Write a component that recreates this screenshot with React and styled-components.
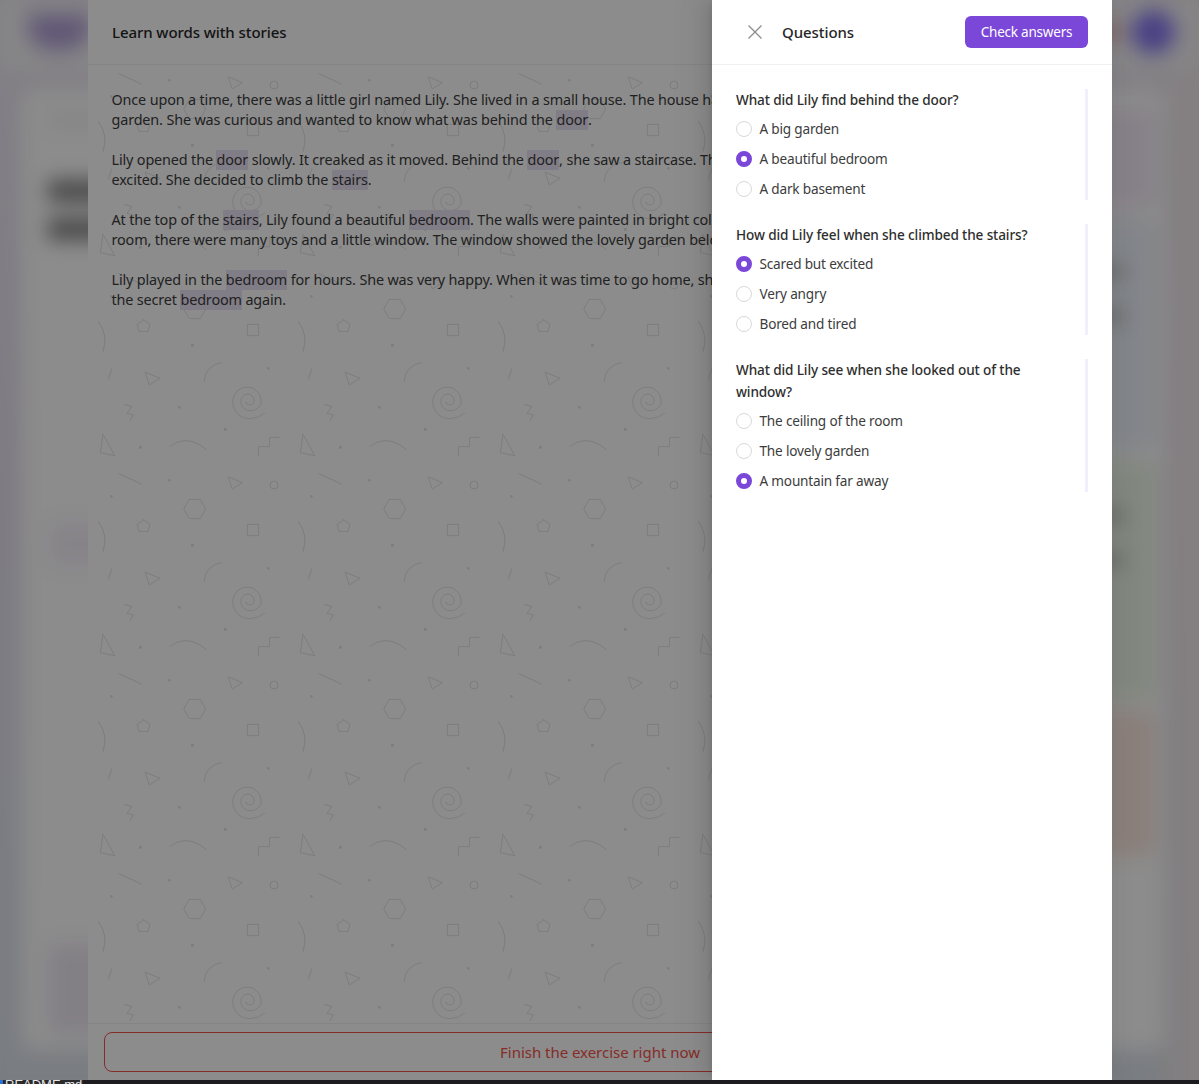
import React from "react";
import styled, { createGlobalStyle } from "styled-components";

const tile = `<svg xmlns='http://www.w3.org/2000/svg' width='200' height='200' viewBox='0 0 600 600'><g fill='none' stroke='#e3e3e3' stroke-width='3'><path d='M30 3Q62 45 45 95M167 0L186 13L180 34L153 34L147 13ZM167 598L186 612L180 634L153 634L147 612ZM478 13H512V47H478ZM72 145L61 178M171 156L216 175L184 195ZM404 127Q352 135 348 185M531 279Q510 296 485 296A51 51 0 0 1 434 245A44 44 0 0 1 478 201A43 44 0 0 1 520 245A33 27 0 0 1 487 272A29 27 0 0 1 458 245A22 23 0 0 1 480 222A18 21 0 0 1 498 243A13 12 0 0 1 485 255A12 10 0 0 1 473 245M109 253L132 260L117 280L137 285L125 302M45 343L80 407L37 398ZM244 380Q300 340 356 390M511 408V380H545V352H574M91 460L162 493M420 470L463 488L433 507ZM287 567L304 538H337L353 567L337 596H304Z'/><circle cx='558' cy='495' r='12'/></g><g fill='#e3e3e3'><rect x='309' y='72' width='8' height='8'/><rect x='408' y='324' width='8' height='8'/><rect x='153' y='378' width='8' height='8'/><circle cx='541' cy='145' r='4'/><circle cx='274' cy='262' r='4'/><circle cx='244' cy='481' r='4'/><circle cx='70' cy='529' r='4'/></g></svg>`;
const tileUrl = `url("data:image/svg+xml,${encodeURIComponent(tile)}")`;

const font = `"Noto Sans", "Open Sans", sans-serif`;

const Global = createGlobalStyle`
  html, body { margin: 0; padding: 0; background: #1c1c1e; }
  body { font-family: ${font}; color: #1f1f1f; overflow: hidden; }
  * { box-sizing: border-box; }
`;

const Screen = styled.div`
  position: relative;
  width: 1199px;
  height: 1084px;
  overflow: hidden;
  background: #1c1c1e;
`;

const Frame = styled.div`
  position: relative;
  width: 1199px;
  height: 1080px;
  overflow: hidden;
  background: #fff;
`;

const BlurredPage = styled.div`
  width: 1239px;
  height: 1120px;
  margin: -20px;
  padding: 20px;
  display: flex;
  flex-direction: column;
  filter: blur(10px);
  background:
    linear-gradient(90deg, transparent 94%, #f2e9ea 98%),
    linear-gradient(180deg, #eeeaf3 0%, #e6e1ee 45%, #dde3ec 100%);
`;

const PageHeader = styled.div`
  height: 70px;
  flex: none;
  display: flex;
  align-items: center;
  justify-content: space-between;
  padding: 0 24px 6px 28px;
  background: #f4f3f6;
`;

const Logo = styled.div`
  width: 62px;
  height: 36px;
  background: #b3a2d8;
  border-radius: 4px 4px 24px 24px;
`;

const HeaderEnd = styled.div`
  display: flex;
  align-items: center;
  gap: 14px;
`;

const RedDot = styled.div`
  width: 14px;
  height: 22px;
  background: #d98a88;
  border-radius: 50%;
`;

const Avatar = styled.div`
  width: 44px;
  height: 44px;
  border-radius: 50%;
  background: #8676f2;
`;

const PageMain = styled.div`
  flex: 1;
  display: flex;
  margin: 20px 34px 30px 22px;
  padding: 18px 10px 16px 26px;
  gap: 16px;
  background: #fff;
  border-radius: 12px;
`;

const LeftCol = styled.div`
  flex: 1;
  display: flex;
  flex-direction: column;
  padding-top: 5px;
`;

const Crumb = styled.div`
  width: 200px;
  height: 14px;
  margin-bottom: 53px;
  background: #f0f0f0;
`;

const Blob = styled.div`
  width: 300px;
  height: 22px;
  margin-bottom: 16px;
  background: #858585;
  border-radius: 4px;
`;

const RowMark = styled.div`
  height: 46px;
  margin-top: 265px;
  background: #f6f1fa;
`;

const BottomMark = styled.div`
  height: 90px;
  margin-top: auto;
  background: #efe9f3;
`;

const RightCol = styled.div`
  width: 320px;
  display: flex;
  flex-direction: column;
  gap: 10px;
`;

const Tint = styled.div`
  height: ${(p) => p.$h}px;
  padding: ${(p) => p.$top || 0}px 0 0 255px;
  display: flex;
  flex-direction: column;
  gap: 32px;
  background: ${(p) => p.$c};
  border-radius: 12px;
`;

const TintLine = styled.div`
  width: 34px;
  height: 12px;
  background: #b0b0b0;
`;

const LeftPanel = styled.section`
  position: absolute;
  top: 0;
  bottom: 0;
  left: 88px;
  width: 1024px;
  display: flex;
  flex-direction: column;
  background: #fff;
`;

const PanelHeader = styled.header`
  height: 65px;
  flex: none;
  display: flex;
  align-items: center;
  padding: 0 24px;
  border-bottom: 1px solid #f0f0f0;
`;

const Title = styled.h2`
  margin: 0;
  font-size: 15px;
  line-height: 22px;
  font-weight: 500;
  color: #262626;
  letter-spacing: -0.08px;
`;

const StoryBody = styled.div`
  flex: 1;
  padding: 25px 24px 24px 23.5px;
  background-image: ${tileUrl};
  background-size: 200px 200px;
  background-position: 0 55px;
`;

const StoryPara = styled.p`
  margin: 0 0 20px;
  font-size: 14.4px;
  line-height: 20px;
  color: #3c3c3c;
  letter-spacing: -0.145px;
  white-space: nowrap;
`;

const Word = styled.span`
  display: inline-block;
  background: #ece3f5;
`;

const PanelFooter = styled.footer`
  flex: none;
  padding: 8px 16px;
  border-top: 1px solid #f0f0f0;
`;

const FinishButton = styled.button`
  width: 100%;
  height: 40px;
  border: 1px solid #f5524a;
  border-radius: 8px;
  background: transparent;
  color: #f5524a;
  font-family: ${font};
  font-size: 15px;
  letter-spacing: -0.03px;
`;

const Mask = styled.div`
  position: absolute;
  inset: 0;
  background: rgba(0, 0, 0, 0.45);
`;

const Drawer = styled.aside`
  position: absolute;
  top: 0;
  bottom: 0;
  left: 712px;
  width: 400px;
  display: flex;
  flex-direction: column;
  background: #fff;
  box-shadow: -6px 0 16px rgba(0, 0, 0, 0.08), -3px 0 6px -4px rgba(0, 0, 0, 0.12),
    -9px 0 28px 8px rgba(0, 0, 0, 0.05);
`;

const DrawerHeader = styled.header`
  height: 65px;
  flex: none;
  display: flex;
  align-items: center;
  padding: 0 24px 0 32px;
  border-bottom: 1px solid #f0f0f0;
`;

const CloseButton = styled.button`
  width: 22px;
  height: 22px;
  padding: 0;
  margin-right: 16px;
  border: 0;
  background: transparent;
  color: #8c8c8c;
  display: flex;
  align-items: center;
  justify-content: center;
`;

const DrawerTitle = styled.h2`
  flex: 1;
  margin: 0;
  font-size: 15px;
  line-height: 22px;
  font-weight: 500;
  color: #262626;
  letter-spacing: -0.08px;
`;

const CheckButton = styled.button`
  width: 123px;
  height: 32px;
  border: 0;
  border-radius: 6px;
  background: #7a47d8;
  color: #fff;
  font-family: ${font};
  font-size: 13.5px;
  letter-spacing: -0.22px;
`;

const DrawerBody = styled.div`
  flex: 1;
  padding: 24px;
  display: flex;
  flex-direction: column;
  gap: 24px;
`;

const Question = styled.div`
  border-right: 3px solid #f2eefc;
`;

const QuestionTitle = styled.div`
  font-size: 13.6px;
  line-height: 22px;
  font-weight: 500;
  color: #2e2e2e;
  letter-spacing: -0.13px;
  padding-right: 40px;
`;

const Options = styled.div`
  display: flex;
  flex-direction: column;
  gap: 8px;
  margin-top: 7px;
`;

const Option = styled.label`
  height: 22px;
  display: flex;
  align-items: center;
  gap: 7.5px;
  font-size: 13.6px;
  line-height: 22px;
  color: #3c3c3c;
  letter-spacing: -0.19px;
`;

const Radio = styled.span`
  width: 16px;
  height: 16px;
  flex: none;
  border-radius: 50%;
  background: #fff;
  border: ${(p) => (p.$on ? "5px solid #7a47d8" : "1px solid #d9d9d9")};
`;

const Taskbar = styled.div`
  height: 4px;
  overflow: hidden;
  width: 83px;
  display: flex;
  background: #2a2a2c;
  color: #e6e6e6;
  font-family: "Liberation Sans", sans-serif;
  font-size: 13px;
  line-height: 12px;
`;

const FileMark = styled.i`
  width: 3px;
  height: 4px;
  margin-right: 2px;
  flex: none;
  background: #2f6fd0;
`;

const FileName = styled.span`
  display: block;
  margin-top: -1px;
`;

const questions = [
  { q: "What did Lily find behind the door?", o: ["A big garden", "A beautiful bedroom", "A dark basement"], a: 1 },
  { q: "How did Lily feel when she climbed the stairs?", o: ["Scared but excited", "Very angry", "Bored and tired"], a: 0 },
  { q: "What did Lily see when she looked out of the window?", o: ["The ceiling of the room", "The lovely garden", "A mountain far away"], a: 2 },
];

export default function App() {
  return (
    <Screen>
      <Global />
      <Frame>
        <BlurredPage>
          <PageHeader>
            <Logo />
            <HeaderEnd>
              <RedDot />
              <Avatar />
            </HeaderEnd>
          </PageHeader>
          <PageMain>
            <LeftCol>
              <Crumb />
              <Blob />
              <Blob />
              <RowMark />
              <BottomMark />
            </LeftCol>
            <RightCol>
              <Tint $h={100} $c="#f5ebf8" />
              <Tint $h={232} $top={48} $c="#edf2fb">
                <TintLine />
                <TintLine />
              </Tint>
              <Tint $h={240} $top={50} $c="#ecf6e6">
                <TintLine />
                <TintLine />
              </Tint>
              <Tint $h={146} $c="#fbe8df" />
            </RightCol>
          </PageMain>
        </BlurredPage>
        <LeftPanel>
          <PanelHeader>
            <Title>Learn words with stories</Title>
          </PanelHeader>
          <StoryBody>
            <StoryPara>
              Once upon a time, there was a little girl named Lily. She lived in a small house. The house had a big garden.<br />
              garden. She was curious and wanted to know what was behind the <Word>door</Word>.
            </StoryPara>
            <StoryPara>
              Lily opened the <Word>door</Word> slowly. It creaked as it moved. Behind the <Word>door</Word>, she saw a staircase. The stairs looked scary but she was<br />
              excited. She decided to climb the <Word>stairs</Word>.
            </StoryPara>
            <StoryPara>
              At the top of the <Word>stairs</Word>, Lily found a beautiful <Word>bedroom</Word>. The walls were painted in bright colors. In the<br />
              room, there were many toys and a little window. The window showed the lovely garden below.
            </StoryPara>
            <StoryPara>
              Lily played in the <Word>bedroom</Word> for hours. She was very happy. When it was time to go home, she promised to visit<br />
              the secret <Word>bedroom</Word> again.
            </StoryPara>
          </StoryBody>
          <PanelFooter>
            <FinishButton>Finish the exercise right now</FinishButton>
          </PanelFooter>
        </LeftPanel>
        <Mask />
        <Drawer>
          <DrawerHeader>
            <CloseButton aria-label="Close">
              <svg width="16" height="16" viewBox="0 0 16 16" fill="none" stroke="currentColor" strokeWidth="1.3">
                <path d="M1.5 1.5L14.5 14.5M14.5 1.5L1.5 14.5" />
              </svg>
            </CloseButton>
            <DrawerTitle>Questions</DrawerTitle>
            <CheckButton>Check answers</CheckButton>
          </DrawerHeader>
          <DrawerBody>
            {questions.map((item) => (
              <Question key={item.q}>
                <QuestionTitle>{item.q}</QuestionTitle>
                <Options>
                  {item.o.map((t, i) => (
                    <Option key={t}>
                      <Radio $on={i === item.a} />
                      {t}
                    </Option>
                  ))}
                </Options>
              </Question>
            ))}
          </DrawerBody>
        </Drawer>
      </Frame>
      <Taskbar>
        <FileMark />
        <FileName>README.md</FileName>
      </Taskbar>
    </Screen>
  );
}
